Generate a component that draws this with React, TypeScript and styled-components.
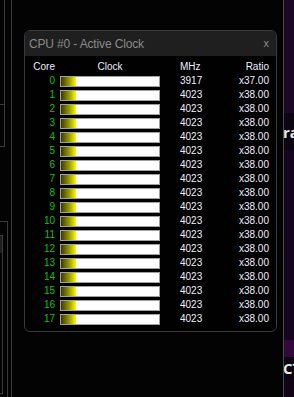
import React from "react";
import styled, { createGlobalStyle } from "styled-components";

const GlobalStyle = createGlobalStyle`
  html, body { margin: 0; padding: 0; background: #030303; }
  #root { width: 294px; height: 397px; }
`;

const Desktop = styled.div`
  position: relative;
  width: 294px;
  height: 397px;
  overflow: hidden;
  display: flex;
  background: #030303;
`;

const MainArea = styled.div`
  position: relative;
  flex: 1;
  min-width: 0;
`;

const BgWindow = styled.div<{ $l: number; $t: number; $w: number; $h: number; $title?: boolean }>`
  position: absolute;
  left: ${(p) => p.$l}px;
  top: ${(p) => p.$t}px;
  width: ${(p) => p.$w}px;
  height: ${(p) => p.$h}px;
  box-sizing: border-box;
  border: 1px solid #3a3a3a;
  background: ${(p) =>
    p.$title ? "linear-gradient(#1e1e1e 0 17px, transparent 17px)" : "transparent"};
`;

const SideStrip = styled.div`
  width: 10px;
  flex: none;
  border-left: 1px solid #4a4a4a;
  display: flex;
  flex-direction: column;
  overflow: hidden;
`;

const StripBand = styled.div<{ $h: number; $bg: string }>`
  height: ${(p) => p.$h}px;
  flex: none;
  background: ${(p) => p.$bg};
  display: flex;
  align-items: center;
  overflow: hidden;
`;

const StripText = styled.span`
  font-family: "Open Sans", "Liberation Sans", sans-serif;
  font-weight: 700;
  font-size: 15px;
  color: #e8e8e8;
  white-space: nowrap;
  margin-left: -1px;
`;

const Window = styled.div`
  position: relative;
  margin: 30px 0 0 24px;
  width: 253px;
  height: 302px;
  box-sizing: border-box;
  border: 1px solid #3a3a3a;
  border-radius: 6px;
  background: #010101;
  overflow: hidden;
  display: flex;
  flex-direction: column;
`;

const TitleBar = styled.div`
  height: 25px;
  flex: none;
  background: #1f1f1f;
  display: flex;
  align-items: center;
  justify-content: space-between;
  padding: 0 7px 0 4px;
`;

const Title = styled.span`
  font-family: "Liberation Sans", sans-serif;
  font-size: 12px;
  letter-spacing: -0.15px;
  color: #8a8a8a;
  white-space: nowrap;
`;

const Close = styled.span`
  font-family: "Liberation Sans", sans-serif;
  font-size: 11px;
  color: #8a8a8a;
  margin-top: -2px;
`;

const Body = styled.div`
  padding: 4px 0 0 0;
  display: flex;
  flex-direction: column;
`;

const Row = styled.div`
  display: grid;
  grid-template-columns: 35px 120px 50px 39px;
  height: 14px;
  align-items: center;
  font-family: "Liberation Sans", sans-serif;
  font-size: 10px;
  line-height: 14px;
`;

const CoreCell = styled.span<{ $head?: boolean }>`
  text-align: right;
  padding-right: 5px;
  color: ${(p) => (p.$head ? "#eeeeff" : "#12c012")};
`;

const HeadCenter = styled.span`
  width: 100px;
  text-align: center;
  color: #eeeeff;
`;

const TextCell = styled.span<{ $right?: boolean }>`
  text-align: ${(p) => (p.$right ? "right" : "left")};
  color: #eeeeff;
`;

const Bar = styled.div`
  width: 100px;
  height: 11px;
  box-sizing: border-box;
  border: 1px solid #a0a0a0;
  background: #ffffff;
  display: flex;
`;

const Fill = styled.div`
  height: 100%;
  background: linear-gradient(to right, #3a3a00, #9a9a00 55%, #ffff00);
`;

const rows = Array.from({ length: 18 }, (_, i) => ({
  core: i,
  mhz: i === 0 ? 3917 : 4023,
  ratio: i === 0 ? "x37.00" : "x38.00",
}));

export default function App() {
  return (
    <>
      <GlobalStyle />
      <Desktop>
        <MainArea>
          <BgWindow $l={-10} $t={-10} $w={22} $h={420} />
          <BgWindow $l={-10} $t={-10} $w={15} $h={115} />
          <BgWindow $l={-10} $t={104} $w={15} $h={43} />
          <BgWindow $l={-10} $t={221} $w={18} $h={200} />
          <BgWindow $l={-10} $t={235} $w={13} $h={159} $title />
          <Window>
            <TitleBar>
              <Title>CPU #0 - Active Clock</Title>
              <Close>x</Close>
            </TitleBar>
            <Body>
              <Row>
                <CoreCell $head>Core</CoreCell>
                <HeadCenter>Clock</HeadCenter>
                <TextCell>MHz</TextCell>
                <TextCell $right>Ratio</TextCell>
              </Row>
              {rows.map((r) => (
                <Row key={r.core}>
                  <CoreCell>{r.core}</CoreCell>
                  <Bar>
                    <Fill style={{ width: "15px" }} />
                  </Bar>
                  <TextCell>{r.mhz}</TextCell>
                  <TextCell $right>{r.ratio}</TextCell>
                </Row>
              ))}
            </Body>
          </Window>
        </MainArea>
        <SideStrip>
          <StripBand $h={113} $bg="#1c0726" />
          <StripBand $h={37} $bg="#0c0410">
            <StripText>ra</StripText>
          </StripBand>
          <StripBand $h={190} $bg="#160520" />
          <StripBand $h={17} $bg="#33093d" />
          <StripBand $h={22} $bg="#0c0410">
            <StripText>CT</StripText>
          </StripBand>
          <StripBand $h={18} $bg="#120416" />
        </SideStrip>
      </Desktop>
    </>
  );
}
